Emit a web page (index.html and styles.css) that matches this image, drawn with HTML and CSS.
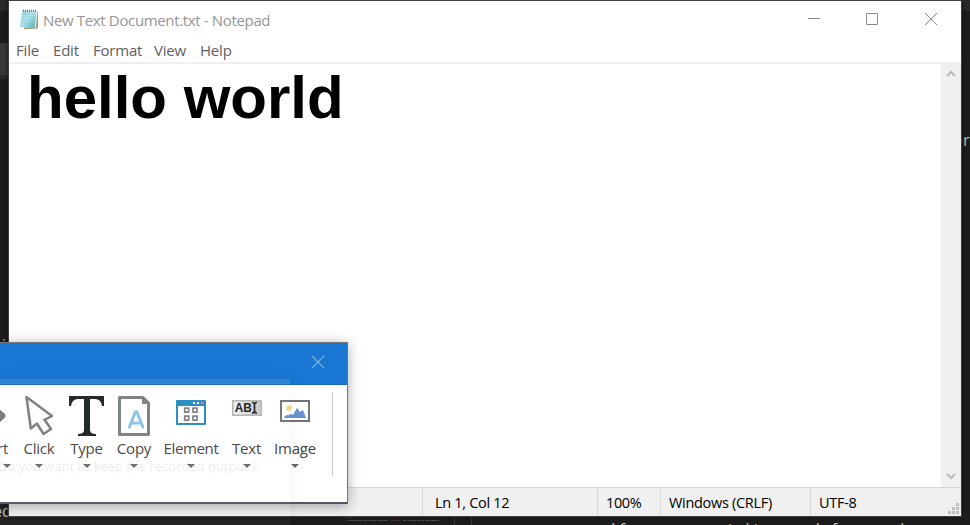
FILE: index.html
```html
<!DOCTYPE html>
<html lang="en">
<head>
<meta charset="utf-8">
<title>New Text Document.txt - Notepad</title>
<link rel="stylesheet" href="styles.css">
</head>
<body>
<main class="desktop">
  <div class="back-panel"></div>
  <span class="back-text back-right">er</span>
  <span class="back-text back-left">vi</span>
  <span class="back-text back-bottom-left">ed</span>
  <span class="back-text back-bottom">If you want it used for a d</span>
  <span class="back-mark">M</span>
  <div class="back-code"><span class="code-blue"># Output</span><br>&nbsp; It is an already that is used to output <span class="code-red">--"Runtop"--</span> as it related to the task capacity</div>
  <div class="back-lines"></div>

  <section class="notepad">
    <header class="titlebar">
      <svg class="app-icon" width="20" height="21" viewBox="0 0 20 21">
        <defs><linearGradient id="pad" x1="0" y1="0" x2="1" y2="1"><stop offset="0" stop-color="#8ccbd6"/><stop offset=".45" stop-color="#b5e5ed"/><stop offset="1" stop-color="#4ba9bd"/></linearGradient></defs>
        <path d="M17 2.5L19 3.5V19.5L5 20.3V18.5L16 18Z" fill="#a89a76"/>
        <path d="M3.5 1.5L18 2L16.5 18.8L.5 18Z" fill="url(#pad)"/>
        <path d="M17.8 2.5L16.3 18.8" stroke="#f3f4e9" stroke-width="1"/>
        <path d="M4 5H16M3.6 8H15.6M3 11H15.4M2.5 14H15" stroke="#79bdcb" stroke-width=".5"/>
        <path d="M4 1.7H18" stroke="#687b7c" stroke-width="2" stroke-dasharray="1 1"/>
      </svg>
      <h1 class="title">New Text Document.txt - Notepad</h1>
      <svg class="window-controls" width="130" height="14" viewBox="0 0 130 14" fill="none" stroke="#8d8d8d">
        <path d="M0 6.5H12M58.5 1.5H69.5V12.5H58.5Z"/><path d="M117 1L129 13M129 1L117 13"/>
      </svg>
    </header>
    <nav class="menu"><span class="m-file">File</span><span class="m-edit">Edit</span><span class="m-format">Format</span><span class="m-view">View</span><span class="m-help">Help</span></nav>
    <div class="editor">
      <p class="document">hello world</p>
      <div class="scrollbar">
        <svg width="10" height="8" viewBox="0 0 10 8"><path d="M1 6L5 2L9 6" fill="none" stroke="#bababa" stroke-width="2"/></svg>
        <svg width="10" height="8" viewBox="0 0 10 8"><path d="M1 2L5 6L9 2" fill="none" stroke="#bababa" stroke-width="2"/></svg>
      </div>
    </div>
    <footer class="status">
      <span></span><span class="s-pos">Ln 1, Col 12</span><span class="s-zoom">100%</span><span class="s-line">Windows (CRLF)</span><span class="s-enc">UTF-8</span>
      <svg class="grip" width="11" height="11" viewBox="0 0 11 11" fill="#bfbfbf"><path d="M8 0h3v3h-3zM4 4h3v3h-3zM8 4h3v3h-3zM0 8h3v3h-3zM4 8h3v3h-3zM8 8h3v3h-3z"/></svg>
    </footer>
  </section>

  <section class="recorder">
    <header class="recorder-title"><svg width="14" height="14" viewBox="0 0 14 14"><path d="M.7 .7L13.3 13.3M13.3 .7L.7 13.3" fill="none" stroke="#8abaea" stroke-width="1.1"/></svg></header>
    <div class="tools">
      <div class="tool tool-cut"><div class="icon"><svg width="7" height="40" viewBox="0 0 7 40"><path d="M0 14L4.5 17.5Q6.5 20 4.5 22L0 26Z" fill="#777"/></svg></div><span class="label">rt</span><i class="arrow"></i></div>
      <div class="tool"><div class="icon"><svg width="28" height="40" viewBox="0 0 28 40"><path d="M1.5 1L5.8 32.5L12 27.5L18.5 38L26 33L19.5 23.8L27 20Z" fill="#fff" stroke="#7d7e80" stroke-width="2.5" stroke-linejoin="round"/></svg></div><span class="label l-click">Click</span><i class="arrow"></i></div>
      <div class="tool"><div class="icon"><svg width="35" height="40" viewBox="0 0 35 40"><path d="M0 0H35V10H33Q32 3 26 3H21V34Q21 38 27 38V40H9V38Q15 38 15 34V3H9Q3 3 2 10H0Z" fill="#202323"/></svg></div><span class="label l-type">Type</span><i class="arrow"></i></div>
      <div class="tool"><div class="icon"><svg width="32" height="40" viewBox="0 0 32 40"><path d="M1.5 1.5H25L30.5 7V38.5H1.5Z" fill="#fff" stroke="#7c7f80" stroke-width="3" stroke-linejoin="round"/><path d="M24 1V8H31Z" fill="#7c7f80"/><path d="M11.5 31L17.3 16H19L24.8 31M14 27H22.5" fill="none" stroke="#89c3e5" stroke-width="3" stroke-linecap="round" stroke-linejoin="round"/></svg></div><span class="label l-copy">Copy</span><i class="arrow"></i></div>
      <div class="tool"><div class="icon"><svg width="30" height="40" viewBox="0 0 30 40"><rect y="4" width="30" height="25" rx="1" fill="#258bc2"/><path d="M2 10H28V27H2Z" fill="#fff"/><path d="M17 6h2v2h-2zM21 6h2v2h-2z" fill="#fff"/><path d="M25 6h2v2h-2z" fill="#f48490"/><path d="M8.7 12.2h4v4h-4zM17 12.2h4v4h-4zM8.7 20.2h4v4h-4zM17 20.2h4v4h-4z" fill="none" stroke="#818181" stroke-width="1.7"/></svg></div><span class="label l-element">Element</span><i class="arrow"></i></div>
      <div class="tool"><div class="icon"><svg width="30" height="40" viewBox="0 0 30 40"><defs><linearGradient id="field"><stop stop-color="#eee"/><stop offset="1" stop-color="#c8c8c8"/></linearGradient></defs><rect x=".75" y="4.75" width="28.5" height="14.5" fill="url(#field)" stroke="#b3b5af" stroke-width="1.5"/><text x="2.7" y="15.5" textLength="17" lengthAdjust="spacingAndGlyphs" class="ab">AB</text><path d="M20 6.5Q22.5 6.5 22.5 8.3V15Q22.5 17 20 17M25 6.5Q22.5 6.5 22.5 8.3M22.5 15Q22.5 17 25 17" fill="none" stroke="#202020" stroke-width="1.7"/></svg></div><span class="label l-text">Text</span><i class="arrow"></i></div>
      <div class="tool"><div class="icon"><svg width="30" height="40" viewBox="0 0 30 40"><rect x="1" y="5" width="28" height="20" fill="#fff" stroke="#747474" stroke-width="2"/><circle cx="9" cy="12" r="2.7" fill="#f1d780"/><path d="M4 22Q5 18.5 8.5 19L11 18L13 19L17 12L20 16L23 14L26 22Z" fill="#6693ce"/></svg></div><span class="label l-image">Image</span><i class="arrow"></i></div>
    </div>
  </section>
  <div class="ghost"><span>Do you want to keep the recorded output ?</span></div>
</main>
</body>
</html>
```
FILE: styles.css
```css
* { box-sizing: border-box; }
body { margin: 0; overflow: hidden; background: #1d1d1d; font-family: "Open Sans", "Noto Sans", sans-serif; }
.desktop { position: relative; width: 970px; height: 525px; overflow: hidden; background: linear-gradient(#292929 0 11px, #1d1d1d 11px); }
.back-panel { position: absolute; left: 0; top: 43px; width: 9px; height: 36px; background: #393939; border-bottom: 4px solid #2a2a2a; }
.back-text { position: absolute; color: #c3c3c3; font-size: 16px; line-height: 20px; white-space: nowrap; }
.back-right { left: 954px; top: 130px; }
.back-left { left: -6px; top: 335px; }
.back-bottom-left { left: -7px; top: 501px; }
.back-bottom { left: 611px; top: 519px; letter-spacing: 4px; }
.back-mark { position: absolute; left: 611px; top: 523px; color: #c3a85a; font-size: 10px; line-height: 12px; }
.back-code { position: absolute; left: 344px; top: 516px; width: 120px; color: #999; font-size: 2.5px; line-height: 3px; white-space: nowrap; }
.code-blue { color: #4a91b7; }
.code-red { color: #a35b4e; }
.back-lines { position: absolute; left: 454px; top: 516px; width: 18px; height: 9px; border: solid #383838; border-width: 0 1px; }
.notepad { position: absolute; left: 8px; top: 0; width: 954px; height: 517px; display: flex; flex-direction: column; background: #fff; border: 1px solid #3f3f3f; box-shadow: 0 0 4px #111; }
.titlebar { height: 36px; flex: none; display: flex; align-items: center; padding: 0 23px 0 10px; }
.app-icon { margin-top: 1px; }
.title { margin: 2px auto 0 4px; color: #969696; font-size: 15px; line-height: 20px; font-weight: 400; letter-spacing: -.35px; white-space: nowrap; }
.window-controls { margin-top: 0; }
.menu { height: 25px; flex: none; display: flex; padding: 3px 0 0 7px; color: #606060; font-size: 15px; line-height: 20px; letter-spacing: -.2px; }
.m-file { width: 37px; } .m-edit { width: 40px; } .m-format { width: 61px; } .m-view { width: 46px; }
.editor { flex: 1; min-height: 0; display: flex; justify-content: space-between; border-top: 2px solid #f0f0f0; }
.document { margin: 0 0 0 18px; font: bold 60px/68px "Liberation Sans", Arial, sans-serif; color: #000; white-space: nowrap; }
.scrollbar { width: 20px; display: flex; flex-direction: column; align-items: center; justify-content: space-between; padding: 6px 0 7px; background: #f0f0f0; }
.status { height: 29px; flex: none; position: relative; display: grid; grid-template-columns: 413px 175px 63px 150px 1fr; padding-top: 1px; background: #f0f0f0; border-top: 1px solid #d7d7d7; color: #000; font-size: 14.5px; line-height: 27px; white-space: nowrap; }
.status > span + span { border-left: 1px solid #d7d7d7; }
.s-pos { padding-left: 12px; letter-spacing: -.3px; }
.s-zoom { padding-left: 8px; letter-spacing: -.4px; }
.s-line { padding-left: 8px; letter-spacing: -.3px; }
.s-enc { padding-left: 8px; letter-spacing: -.3px; }
.grip { position: absolute; right: 2px; bottom: 2px; }
.recorder { position: absolute; left: -1px; top: 342px; width: 349px; height: 162px; background: #fff; border: 1px solid #777; border-bottom: 2px solid #55566a; box-shadow: 0 2px 12px #0005; }
.recorder-title { height: 42px; display: flex; justify-content: flex-end; padding: 12px 22px 0 0; background: #1976d2; border-bottom: 1px solid #1967b5; }
.tools { display: grid; grid-template-columns: 15px 48px 47px 48px 66px 45px 52px; width: 333px; height: 84px; margin-top: 7px; border-right: 1px solid #c9c9c9; }
.tool { display: flex; flex-direction: column; align-items: center; min-width: 0; }
.tool-cut { align-items: flex-start; }
.icon { height: 46px; padding-top: 4px; }
.label { height: 20px; color: #444; font-size: 15px; line-height: 20px; letter-spacing: -.2px; white-space: nowrap; }
.l-element { letter-spacing: -.35px; }
.arrow { width: 0; height: 0; margin-top: 6px; border: 4px solid transparent; border-top-color: #686868; border-bottom: 0; }
.tool-cut .label { margin-left: -3px; }
.tool-cut .arrow { margin-left: 3px; }
.ab { font: bold 12px "Liberation Sans", sans-serif; fill: #202020; }
.ghost { position: absolute; left: 0; top: 379px; width: 290px; height: 146px; padding: 77px 0 0 -2px; background: linear-gradient(#ffffff18 0 5px, #ffffff08 5px); box-shadow: 0 0 18px #0000000b; color: #8888882e; font-size: 13px; line-height: 20px; white-space: nowrap; }
.ghost span { display: block; margin: 77px 0 0 -2px; }
```
